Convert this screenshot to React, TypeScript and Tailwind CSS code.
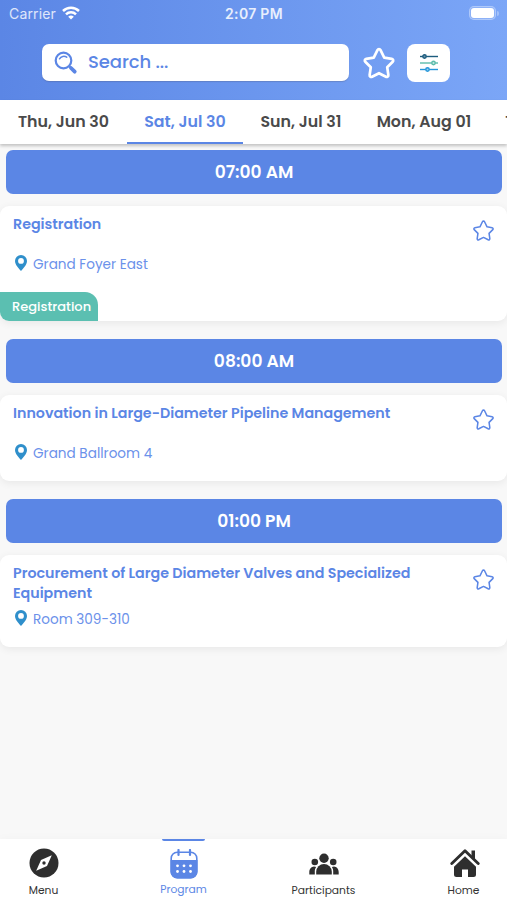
import React from "react";

const STAR =
  "M12 2.200c.5 0 .9.300 1.100.700l2.600 5.300 5.300.900c1 .2 1.400 1.300.7 2l-3.900 3.900.8 5.500c.1 1-.9 1.700-1.700 1.200L12 19.200l-4.900 2.500c-.9.500-1.800-.200-1.700-1.200l.8-5.500-3.900-3.900c-.7-.7-.3-1.800.7-2l5.300-.9 2.600-5.300c.2-.4.600-.7 1.100-.7z";

function Star({ className, strokeWidth }: { className: string; strokeWidth: number }) {
  return (
    <svg viewBox="0 0 24 24" className={className} fill="none" stroke="currentColor" strokeWidth={strokeWidth} strokeLinejoin="round">
      <path d={STAR} />
    </svg>
  );
}

function StatusBar() {
  return (
    <div className="grid h-[27px] grid-cols-3 items-center pl-[9px] pr-[8px] font-['Inter','Liberation_Sans',sans-serif] text-[14px]">
      <div className="flex items-center gap-[6px]">
        <span className="tracking-[0.15px] text-white/80">Carrier</span>
        <svg viewBox="0 0 18 14" className="-mt-[2px] h-[14px] w-[18px]" fill="none" stroke="white" strokeWidth="2.500">
          <path d="M1 5a11.500 11.500 0 0 1 16 0" />
          <path d="M4 8.300a7.200 7.200 0 0 1 10 0" />
          <path d="M9 13.600 6.200 10.700a4.100 4.100 0 0 1 5.600 0z" fill="white" stroke="none" />
        </svg>
      </div>
      <span className="text-center font-semibold tracking-[0.3px] text-white/85">2:07 PM</span>
      <div className="-mt-px flex items-center justify-end">
        <div className="h-[14px] w-[27px] rounded-[5px] border border-white/30 bg-white/15 p-[1px]">
          <div className="h-full w-[23px] rounded-[3px] bg-white" />
        </div>
        <div className="ml-px h-[5px] w-[2px] rounded-r bg-white/30" />
      </div>
    </div>
  );
}

function SearchRow() {
  return (
    <div className="flex items-center pl-[42px] pt-4">
      <div className="flex h-[37px] w-[307px] items-center rounded-[7px] bg-white pl-[12px] text-[#5b86e5] shadow-[0_1px_1px_rgba(70,70,90,0.25)]">
        <svg viewBox="0 0 24 24" className="h-6 w-6" fill="none" stroke="currentColor">
          <circle cx="9.500" cy="9.500" r="7.800" strokeWidth="2.200" />
          <path d="M5.500 7.800a5 5 0 0 1 7.200-1.600" strokeWidth="1.500" strokeLinecap="round" />
          <path d="m15 15 2.500 2.500" strokeWidth="2.400" />
          <path d="m17 17 3.700 3.700" strokeWidth="3.800" strokeLinecap="round" />
        </svg>
        <span className="-mt-[2px] ml-[10px] text-[18px] font-medium tracking-[-0.1px]">Search ...</span>
      </div>
      <Star className="ml-[13px] h-[34px] w-[34px] text-white" strokeWidth={1.9} />
      <div className="ml-[11px] mt-px flex h-[38px] w-[43px] items-center justify-center rounded-[8px] bg-white">
        <svg viewBox="0 0 18 18" className="h-[18px] w-[18px]" strokeWidth="1.400">
          <g stroke="#1d5c7e" fill="#6b95ab"><path d="M0 2.500h18" /><circle cx="4.500" cy="2.500" r="1.700" /></g>
          <g stroke="#5cbcab" fill="#c4e6e0"><path d="M0 9h18" /><circle cx="13.500" cy="9" r="1.700" /></g>
          <g stroke="#2496da" fill="#9dd0ef"><path d="M0 15.500h18" /><circle cx="7.500" cy="15.500" r="1.700" /></g>
        </svg>
      </div>
    </div>
  );
}

const days = [
  { label: "Thu, Jun 30", width: "w-[127px]" },
  { label: "Sat, Jul 30", width: "w-[116px]", active: true },
  { label: "Sun, Jul 31", width: "w-[116px]" },
  { label: "Mon, Aug 01", width: "w-[130px]" },
  { label: "Tue, Aug 02", width: "w-[125px]" },
];

function Tabs() {
  return (
    <nav className="flex h-[44px] overflow-hidden bg-white text-[15.800px] font-semibold text-[#4a4a4a]">
      {days.map((d) => (
        <div
          key={d.label}
          className={`flex shrink-0 items-center justify-center whitespace-nowrap border-b-[2px] pt-[2px] ${d.width} ${
            d.active ? "border-[#5b86e5] text-[#5b86e5]" : "border-transparent"
          }`}
        >
          {d.label}
        </div>
      ))}
    </nav>
  );
}

function TimeBar({ children }: { children: string }) {
  return (
    <div className="ml-[6px] mr-[5px] flex h-[44px] items-center justify-center rounded-[7px] bg-[#5b86e5] pt-px text-[17.100px] font-semibold text-white">
      {children}
    </div>
  );
}

function Pin() {
  return (
    <svg viewBox="0 0 12 16" className="-mt-[5px] h-4 w-3" fill="#2f8fcb">
      <path fillRule="evenodd" d="M6 0a6 6 0 0 1 6 6c0 4-4.500 8-6 10C4.500 14 0 10 0 6a6 6 0 0 1 6-6zm0 3a2.900 2.900 0 1 0 0 5.800A2.900 2.900 0 0 0 6 3z" />
    </svg>
  );
}

interface SessionProps {
  title: React.ReactNode;
  place: string;
  height: string;
  titleHeight: string;
  tag?: string;
}

function Session({ title, place, height, titleHeight, tag }: SessionProps) {
  return (
    <article className={`mt-3 flex flex-col justify-between overflow-hidden rounded-[9px] bg-white text-[#5b86e5] shadow-[0_2px_9px_rgba(0,0,0,0.07)] ${height}`}>
      <div className="flex justify-between pl-[13px] pr-[12px]">
        <div className="pt-[9px]">
          <h3 className={`whitespace-nowrap text-[14.250px] font-semibold leading-[19.500px] ${titleHeight}`}>{title}</h3>
          <div className="flex h-5 items-center pl-[2px] text-[13.600px] text-[#6b91ea]">
            <Pin />
            <span className="ml-[6px] mt-px">{place}</span>
          </div>
        </div>
        <Star className="mt-[13px] h-[23px] w-[23px]" strokeWidth={1.6} />
      </div>
      {tag && (
        <div className="flex h-[29px] w-[98px] items-center rounded-tr-[13px] bg-[#5bbfb1] pl-[12px] pt-px text-[13px] font-medium text-white">
          {tag}
        </div>
      )}
    </article>
  );
}

function CompassIcon() {
  return (
    <svg viewBox="0 0 30 30" className="h-[30px] w-[30px]">
      <circle cx="15" cy="15" r="14.500" fill="#2e2e2e" />
      <path d="m22.800 7.200-4.800 10.800L7.200 22.800 12 12z" fill="white" />
      <circle cx="15" cy="15" r="1.700" fill="#2e2e2e" />
    </svg>
  );
}

function CalendarIcon() {
  return (
    <svg viewBox="0 0 28 30" className="h-[30px] w-7" fill="none" stroke="#5b86e5">
      <rect x="1.200" y="3.200" width="25.600" height="25.600" rx="6" strokeWidth="1.600" />
      <path d="M.5 11h27v11.500a7 7 0 0 1-7 7h-13a7 7 0 0 1-7-7z" fill="#5b86e5" stroke="none" />
      <path d="M8.500 1v5M20 1v5" strokeWidth="2.200" strokeLinecap="round" />
      <g fill="white" stroke="none">
        {[7.5, 14, 20.5].map((x) => (
          <React.Fragment key={x}>
            <circle cx={x} cy="16.800" r="1.400" />
            <circle cx={x} cy="22.500" r="1.400" />
          </React.Fragment>
        ))}
      </g>
    </svg>
  );
}

function PeopleIcon() {
  return (
    <svg viewBox="0 0 30 22" className="mb-[3px] h-[22px] w-[30px]" fill="#2e2e2e">
      <circle cx="15" cy="5.200" r="4.700" />
      <circle cx="5.800" cy="9" r="3.300" />
      <circle cx="24.200" cy="9" r="3.300" />
      <path d="M7.200 21.500v-2.700a7.800 7.800 0 0 1 15.600 0v2.700z" />
      <path d="M5.800 21.500H.3v-2.300c0-3 2-5.400 4.700-5.600.8 0 1.500.2 2.100.5-1 1.500-1.400 3-1.300 4.700zM24.200 21.500h5.500v-2.300c0-3-2-5.400-4.700-5.600-.8 0-1.500.2-2.100.5 1 1.500 1.400 3 1.300 4.700z" />
    </svg>
  );
}

function HomeIcon() {
  return (
    <svg viewBox="0 0 30 30" className="ml-[2px] h-[30px] w-[30px]">
      <path d="M21.500 2.500H25v9l-3.500-3.300z" fill="#2e2e2e" />
      <path d="M1.800 15.500 15 2.800l13.200 12.700" fill="none" stroke="#2e2e2e" strokeWidth="2.900" strokeLinecap="round" strokeLinejoin="round" />
      <path d="M15 8.300 26 18.700v7.800a2.500 2.500 0 0 1-2.500 2.500H18v-7.500h-6V29H6.500A2.500 2.500 0 0 1 4 26.500v-7.800z" fill="#2e2e2e" />
    </svg>
  );
}

const navItems = [
  { label: "Menu", icon: <CompassIcon /> },
  { label: "Program", icon: <CalendarIcon />, active: true },
  { label: "Participants", icon: <PeopleIcon /> },
  { label: "Home", icon: <HomeIcon /> },
];

function BottomNav() {
  return (
    <nav className="flex h-[61px] justify-between bg-white text-[10.700px] text-[#333] shadow-[0_-2px_8px_rgba(0,0,0,0.02)]">
      {navItems.map((n) => (
        <div key={n.label} className={`flex w-[87px] flex-col items-center ${n.active ? "text-[#5b86e5]" : ""}`}>
          <div className={`h-[2px] w-[43px] rounded-b-sm ${n.active ? "bg-[#5b86e5]" : ""}`} />
          <div className={`flex h-[32px] items-end justify-center ${n.active ? "mt-[6px]" : "mt-[5px]"}`}>{n.icon}</div>
          <span className={`leading-4 ${n.active ? "mt-[3px]" : "mt-[5px]"}`}>{n.label}</span>
        </div>
      ))}
    </nav>
  );
}

export default function App() {
  return (
    <div className="flex h-[900px] w-[507px] flex-col overflow-hidden bg-[#f8f8f8] font-['Poppins','Inter',sans-serif]">
      <header className="h-[100px] shrink-0 bg-gradient-to-r from-[#5b86e5] to-[#7ba6f7]">
        <StatusBar />
        <SearchRow />
      </header>
      <div className="shadow-[0_2px_3px_rgba(0,0,0,0.22)]">
        <Tabs />
      </div>
      <main className="flex-1 pt-[6px]">
        <TimeBar>07:00 AM</TimeBar>
        <Session title="Registration" place="Grand Foyer East" height="h-[115px]" titleHeight="h-10" tag="Registration" />
        <div className="h-[18px]" />
        <TimeBar>08:00 AM</TimeBar>
        <Session title="Innovation in Large-Diameter Pipeline Management" place="Grand Ballroom 4" height="h-[86px]" titleHeight="h-10" />
        <div className="h-[18px]" />
        <TimeBar>01:00 PM</TimeBar>
        <Session
          title={<>Procurement of Large Diameter Valves and Specialized<br />Equipment</>}
          place="Room 309-310"
          height="h-[92px]"
          titleHeight="h-[46px]"
        />
      </main>
      <BottomNav />
    </div>
  );
}
